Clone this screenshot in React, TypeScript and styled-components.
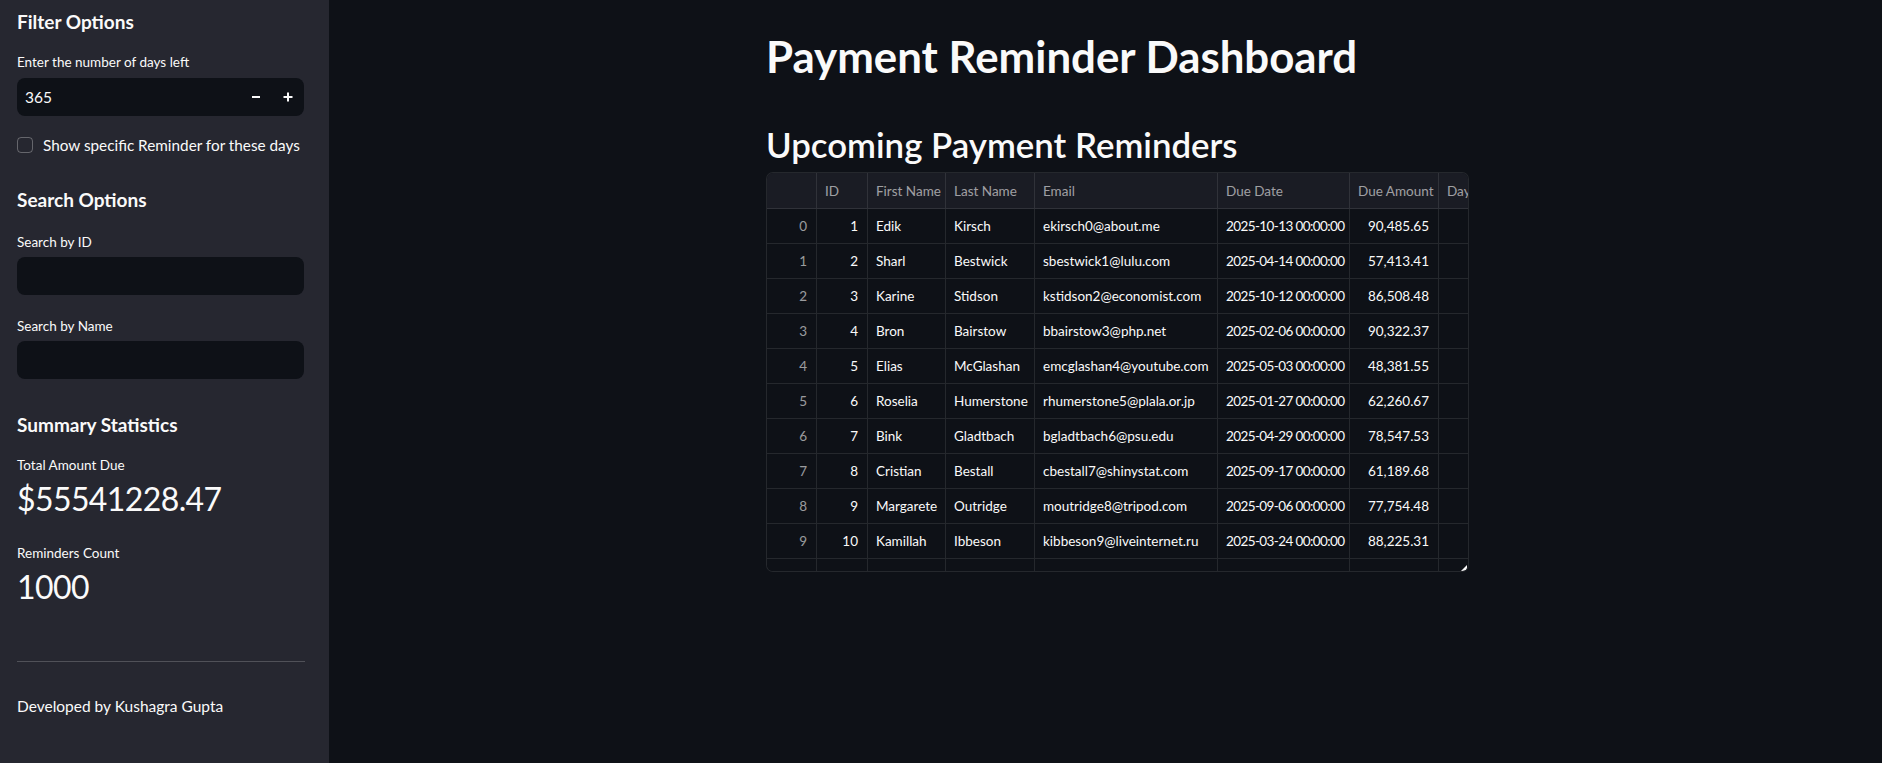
import React from "react";
import styled, { createGlobalStyle } from "styled-components";

const FONT = `"Lato", "Source Sans Pro", "Noto Sans", sans-serif`;

const Global = createGlobalStyle`
  html, body { margin: 0; padding: 0; background: #0e1117; }
  body { font-family: ${FONT}; color: #fafafa; -webkit-font-smoothing: antialiased; }
  * { box-sizing: border-box; }
`;

const Shell = styled.div`
  display: flex;
  width: 100%;
  height: 763px;
  overflow: hidden;
  background: #0e1117;
`;

const Sidebar = styled.aside`
  width: 329px;
  flex: none;
  height: 100%;
  background: #262730;
  padding: 10px 25px 0 17px;
  display: flex;
  flex-direction: column;
`;

const SideHeading = styled.h3<{ $mt?: number }>`
  margin: ${(p) => p.$mt ?? 0}px 0 0;
  font-size: 19px;
  line-height: 24px;
  font-weight: 700;
  color: #fafafa;
`;

const FieldLabel = styled.label<{ $mt?: number }>`
  display: block;
  margin-top: ${(p) => p.$mt ?? 0}px;
  font-size: 13.5px;
  line-height: 20px;
  color: #fafafa;
`;

const InputBox = styled.div<{ $mt?: number }>`
  margin-top: ${(p) => p.$mt ?? 5}px;
  width: 287px;
  height: 38px;
  background: #0e1117;
  border-radius: 8px;
  display: flex;
  align-items: center;
`;

const InputText = styled.span`
  flex: 1;
  padding-left: 8px;
  font-size: 15.5px;
  color: #fafafa;
`;

const StepButton = styled.button`
  width: 32px;
  height: 38px;
  border: 0;
  background: transparent;
  color: #fafafa;
  display: flex;
  align-items: center;
  justify-content: center;
  padding: 0;
  cursor: pointer;
`;

const CheckRow = styled.div`
  margin-top: 17px;
  height: 24px;
  display: flex;
  align-items: center;
  gap: 10px;
  font-size: 15.3px;
  color: #fafafa;
`;

const CheckBox = styled.span`
  width: 16px;
  height: 16px;
  border: 1px solid rgba(250, 250, 250, 0.3);
  border-radius: 4px;
  flex: none;
`;

const MetricLabel = styled.div<{ $mt: number }>`
  margin-top: ${(p) => p.$mt}px;
  font-size: 13.5px;
  line-height: 20px;
  color: #fafafa;
`;

const MetricValue = styled.div`
  margin-top: 2px;
  font-size: 32px;
  line-height: 44px;
  letter-spacing: -0.6px;
  font-weight: 400;
  color: #fafafa;
`;

const Divider = styled.hr`
  margin: 52px 0 0;
  width: 288px;
  border: 0;
  border-top: 1px solid rgba(250, 250, 250, 0.2);
`;

const Footer = styled.p`
  margin: 32px 0 0;
  font-size: 15.5px;
  line-height: 24px;
  color: #fafafa;
`;

const Main = styled.main`
  flex: 1;
  height: 100%;
  padding: 30px 0 0 437px;
`;

const Content = styled.div`
  width: 704px;
  display: flex;
  flex-direction: column;
`;

const Title = styled.h1`
  margin: 0;
  font-size: 43.8px;
  line-height: 53px;
  font-weight: 700;
  color: #fafafa;
`;

const Subtitle = styled.h2`
  margin: 40px 0 0;
  font-size: 34.8px;
  line-height: 43px;
  font-weight: 600;
  color: #fafafa;
`;

const Grid = styled.div`
  position: relative;
  margin-top: 6px;
  width: 703px;
  height: 400px;
  border: 1px solid rgba(250, 250, 250, 0.1);
  border-radius: 7px;
  overflow: hidden;
  background: #0e1117;
`;

const COLS = "50px 51px 78px 89px 183px 132px 89px 120px";

const GridRow = styled.div<{ $head?: boolean }>`
  display: grid;
  grid-template-columns: ${COLS};
  height: ${(p) => (p.$head ? 36 : 35)}px;
  background: ${(p) => (p.$head ? "#1a1c24" : "#0e1117")};
  border-bottom: 1px solid rgba(250, 250, 250, 0.1);
`;

const Cell = styled.div<{ $right?: boolean; $muted?: boolean; $head?: boolean; $tight?: boolean }>`
  border-right: 1px solid rgba(250, 250, 250, 0.1);
  padding: 0 9px 0 8px;
  display: flex;
  align-items: center;
  justify-content: ${(p) => (p.$right ? "flex-end" : "flex-start")};
  font-size: 13.5px;
  letter-spacing: ${(p) => (p.$tight ? "-0.6px" : "normal")};
  white-space: nowrap;
  overflow: hidden;
  color: ${(p) => (p.$muted || p.$head ? "rgba(250, 250, 250, 0.6)" : "#fafafa")};
`;

const ResizeHandle = styled.span`
  position: absolute;
  right: 1px;
  bottom: 0;
  width: 0;
  height: 0;
  border-left: 6px solid transparent;
  border-bottom: 6px solid #fafafa;
`;

const rows: [number, number, string, string, string, string, string][] = [
  [0, 1, "Edik", "Kirsch", "ekirsch0@about.me", "2025-10-13 00:00:00", "90,485.65"],
  [1, 2, "Sharl", "Bestwick", "sbestwick1@lulu.com", "2025-04-14 00:00:00", "57,413.41"],
  [2, 3, "Karine", "Stidson", "kstidson2@economist.com", "2025-10-12 00:00:00", "86,508.48"],
  [3, 4, "Bron", "Bairstow", "bbairstow3@php.net", "2025-02-06 00:00:00", "90,322.37"],
  [4, 5, "Elias", "McGlashan", "emcglashan4@youtube.com", "2025-05-03 00:00:00", "48,381.55"],
  [5, 6, "Roselia", "Humerstone", "rhumerstone5@plala.or.jp", "2025-01-27 00:00:00", "62,260.67"],
  [6, 7, "Bink", "Gladtbach", "bgladtbach6@psu.edu", "2025-04-29 00:00:00", "78,547.53"],
  [7, 8, "Cristian", "Bestall", "cbestall7@shinystat.com", "2025-09-17 00:00:00", "61,189.68"],
  [8, 9, "Margarete", "Outridge", "moutridge8@tripod.com", "2025-09-06 00:00:00", "77,754.48"],
  [9, 10, "Kamillah", "Ibbeson", "kibbeson9@liveinternet.ru", "2025-03-24 00:00:00", "88,225.31"],
];

const headers = ["", "ID", "First Name", "Last Name", "Email", "Due Date", "Due Amount", "Days Left"];

const MinusIcon = () => (
  <svg width="10" height="10" viewBox="0 0 10 10">
    <line x1="1" y1="5" x2="9" y2="5" stroke="#fafafa" strokeWidth="2" />
  </svg>
);

const PlusIcon = () => (
  <svg width="10" height="10" viewBox="0 0 10 10">
    <line x1="0.5" y1="5" x2="9.5" y2="5" stroke="#fafafa" strokeWidth="2" />
    <line x1="5" y1="0.5" x2="5" y2="9.5" stroke="#fafafa" strokeWidth="2" />
  </svg>
);

export default function App() {
  return (
    <>
      <Global />
      <Shell>
        <Sidebar>
          <SideHeading>Filter Options</SideHeading>
          <FieldLabel $mt={18}>Enter the number of days left</FieldLabel>
          <InputBox $mt={6}>
            <InputText>365</InputText>
            <StepButton aria-label="decrement">
              <MinusIcon />
            </StepButton>
            <StepButton aria-label="increment">
              <PlusIcon />
            </StepButton>
          </InputBox>
          <CheckRow>
            <CheckBox />
            <span>Show specific Reminder for these days</span>
          </CheckRow>

          <SideHeading $mt={31}>Search Options</SideHeading>
          <FieldLabel $mt={20}>Search by ID</FieldLabel>
          <InputBox $mt={5} />
          <FieldLabel $mt={21}>Search by Name</FieldLabel>
          <InputBox $mt={5} />

          <SideHeading $mt={34}>Summary Statistics</SideHeading>
          <MetricLabel $mt={18}>Total Amount Due</MetricLabel>
          <MetricValue>$55541228.47</MetricValue>
          <MetricLabel $mt={22}>Reminders Count</MetricLabel>
          <MetricValue>1000</MetricValue>

          <Divider />
          <Footer>Developed by Kushagra Gupta</Footer>
        </Sidebar>

        <Main>
          <Content>
            <Title>Payment Reminder Dashboard</Title>
            <Subtitle>Upcoming Payment Reminders</Subtitle>
            <Grid>
              <GridRow $head>
                {headers.map((h, i) => (
                  <Cell key={i} $head>
                    {h}
                  </Cell>
                ))}
              </GridRow>
              {rows.map((r) => (
                <GridRow key={r[0]}>
                  <Cell $right $muted>{r[0]}</Cell>
                  <Cell $right>{r[1]}</Cell>
                  <Cell>{r[2]}</Cell>
                  <Cell>{r[3]}</Cell>
                  <Cell>{r[4]}</Cell>
                  <Cell $tight>{r[5]}</Cell>
                  <Cell $right>{r[6]}</Cell>
                  <Cell $right />
                </GridRow>
              ))}
              <GridRow>
                {headers.map((_, i) => (
                  <Cell key={i} />
                ))}
              </GridRow>
              <ResizeHandle />
            </Grid>
          </Content>
        </Main>
      </Shell>
    </>
  );
}
